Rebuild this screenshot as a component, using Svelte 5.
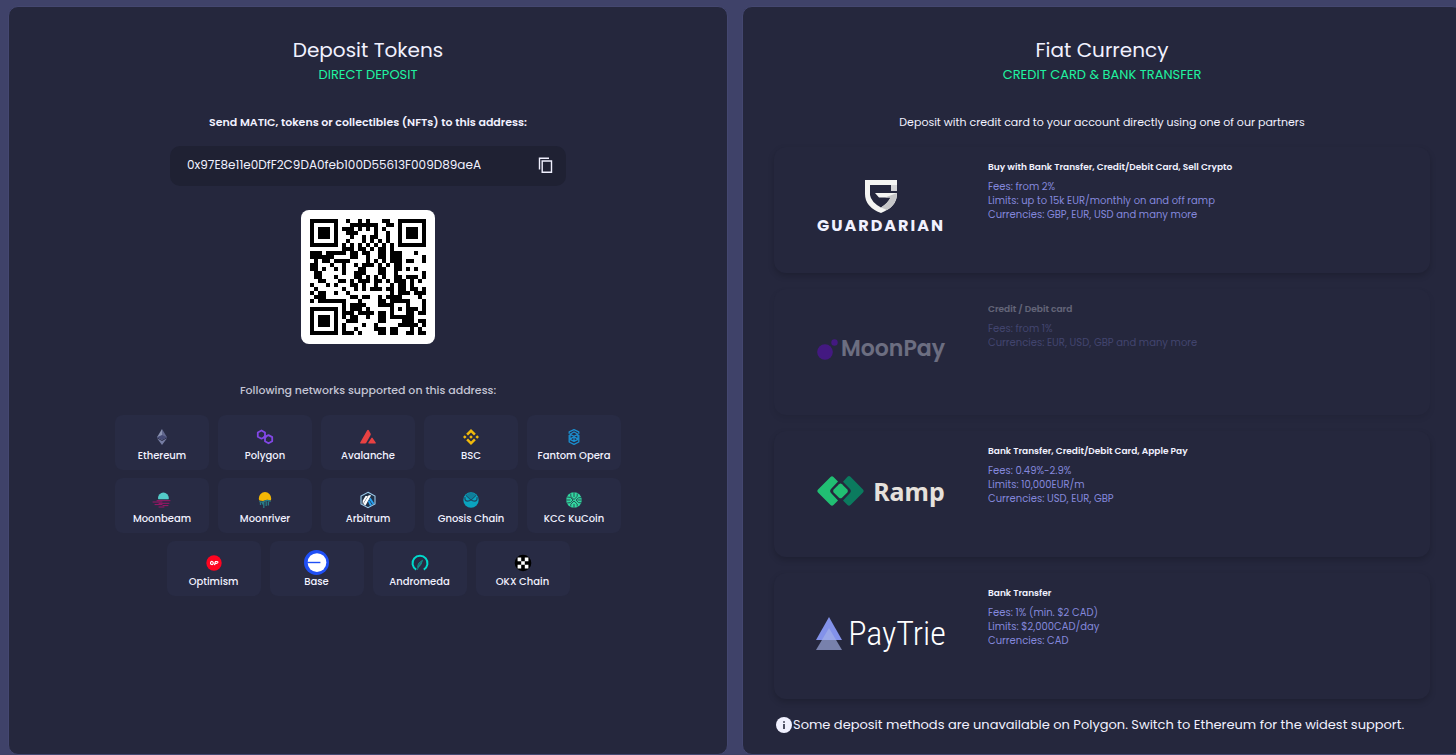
<script>
  const address = "0x97E8e11e0DfF2C9DA0feb100D55613F009D89aeA";

  let copied = $state(false);

  const networks = [
    "Ethereum", "Polygon", "Avalanche", "BSC", "Fantom Opera",
    "Moonbeam", "Moonriver", "Arbitrum", "Gnosis Chain", "KCC KuCoin",
    "Optimism", "Base", "Andromeda", "OKX Chain",
  ];

  const partners = [
    {
      id: "guardarian",
      title: "Buy with Bank Transfer, Credit/Debit Card, Sell Crypto",
      lines: ["Fees: from 2%", "Limits: up to 15k EUR/monthly on and off ramp", "Currencies: GBP, EUR, USD and many more"],
    },
    {
      id: "moonpay",
      title: "Credit / Debit card",
      lines: ["Fees: from 1%", "Currencies: EUR, USD, GBP and many more"],
      disabled: true,
    },
    {
      id: "ramp",
      title: "Bank Transfer, Credit/Debit Card, Apple Pay",
      lines: ["Fees: 0.49%-2.9%", "Limits: 10,000EUR/m", "Currencies: USD, EUR, GBP"],
    },
    {
      id: "paytrie",
      title: "Bank Transfer",
      lines: ["Fees: 1% (min. $2 CAD)", "Limits: $2,000CAD/day", "Currencies: CAD"],
    },
  ];

  async function copyAddress() {
    await navigator.clipboard.writeText(address);
    copied = true;
  }

  // QR code, version 3 (29x29), byte mode, level L, mask 0
  const SIZE = 29;
  const DATA_WORDS = 55;
  const EC_WORDS = 15;
  const LEVEL_BITS = 1;
  const MASK = 0;

  function gfMul(a, b) {
    let r = 0;
    for (let i = 7; i >= 0; i--) {
      r = (r << 1) ^ ((r >> 7) * 0x11d);
      if ((b >> i) & 1) r ^= a;
    }
    return r;
  }

  function ecWords(data) {
    const gen = new Array(EC_WORDS).fill(0);
    gen[EC_WORDS - 1] = 1;
    let root = 1;
    for (let i = 0; i < EC_WORDS; i++) {
      for (let j = 0; j < EC_WORDS; j++) {
        gen[j] = gfMul(gen[j], root);
        if (j + 1 < EC_WORDS) gen[j] ^= gen[j + 1];
      }
      root = gfMul(root, 2);
    }
    const rem = new Array(EC_WORDS).fill(0);
    for (const b of data) {
      const f = b ^ rem.shift();
      rem.push(0);
      gen.forEach((g, i) => (rem[i] ^= gfMul(g, f)));
    }
    return rem;
  }

  function encode(text) {
    let bits = "0100" + text.length.toString(2).padStart(8, "0");
    for (const c of text) bits += c.charCodeAt(0).toString(2).padStart(8, "0");
    bits += "0000";
    const words = bits.match(/.{8}/g).map((b) => parseInt(b, 2));
    for (let pad = 0xec; words.length < DATA_WORDS; pad ^= 0xfd) words.push(pad);
    return [...words, ...ecWords(words)];
  }

  function buildMatrix(words) {
    const m = Array.from({ length: SIZE }, () => new Array(SIZE).fill(false));
    const fixed = Array.from({ length: SIZE }, () => new Array(SIZE).fill(false));
    const set = (x, y, v) => {
      if (x < 0 || y < 0 || x >= SIZE || y >= SIZE) return;
      m[y][x] = v;
      fixed[y][x] = true;
    };

    for (let i = 0; i < SIZE; i++) {
      set(6, i, i % 2 === 0);
      set(i, 6, i % 2 === 0);
    }
    for (const [cx, cy] of [[3, 3], [SIZE - 4, 3], [3, SIZE - 4]]) {
      for (let dy = -4; dy <= 4; dy++) {
        for (let dx = -4; dx <= 4; dx++) {
          const d = Math.max(Math.abs(dx), Math.abs(dy));
          set(cx + dx, cy + dy, d !== 2 && d !== 4);
        }
      }
    }
    for (let dy = -2; dy <= 2; dy++) {
      for (let dx = -2; dx <= 2; dx++) {
        set(22 + dx, 22 + dy, Math.max(Math.abs(dx), Math.abs(dy)) !== 1);
      }
    }

    // format info
    const fmt = (LEVEL_BITS << 3) | MASK;
    let rem = fmt;
    for (let i = 0; i < 10; i++) rem = (rem << 1) ^ ((rem >> 9) * 0x537);
    const info = ((fmt << 10) | rem) ^ 0x5412;
    const bit = (i) => ((info >> i) & 1) === 1;
    for (let i = 0; i <= 5; i++) set(8, i, bit(i));
    set(8, 7, bit(6));
    set(8, 8, bit(7));
    set(7, 8, bit(8));
    for (let i = 9; i < 15; i++) set(14 - i, 8, bit(i));
    for (let i = 0; i < 8; i++) set(SIZE - 1 - i, 8, bit(i));
    for (let i = 8; i < 15; i++) set(8, SIZE - 15 + i, bit(i));
    set(8, SIZE - 8, true);

    // zigzag placement
    let n = 0;
    for (let right = SIZE - 1; right >= 1; right -= 2) {
      if (right === 6) right = 5;
      for (let v = 0; v < SIZE; v++) {
        for (let j = 0; j < 2; j++) {
          const x = right - j;
          const y = ((right + 1) & 2) === 0 ? SIZE - 1 - v : v;
          if (fixed[y][x]) continue;
          const dark = n < words.length * 8 && ((words[n >> 3] >> (7 - (n & 7))) & 1) === 1;
          m[y][x] = dark !== ((x + y) % 2 === 0);
          n++;
        }
      }
    }
    return m;
  }

  function qrPath(text) {
    let d = "";
    buildMatrix(encode(text)).forEach((row, y) => row.forEach((v, x) => {
      if (v) d += `M${x} ${y}h1v1h-1z`;
    }));
    return d;
  }

  const qr = qrPath(address);
</script>

{#snippet networkIcon(name)}
  <svg class:large={name === "Base"} viewBox="0 0 16 16" aria-hidden="true">
    {#if name === "Ethereum"}
      <path d="M8 0 3 8.2 8 11z" fill="#8a92b2" />
      <path d="M8 0l5 8.2L8 11z" fill="#62688f" />
      <path d="M3 8.2 8 6l5 2.2L8 11z" fill="#454a75" />
      <path d="M3 9.3 8 16l5-6.7-5 2.8z" fill="#767da3" />
    {:else if name === "Polygon"}
      <g fill="none" stroke="#8247e5" stroke-width="1.8" stroke-linejoin="round">
        <path d="M8 7.900 4.500 9.700.8 7.700V3.500L4.500 1.500 8 3.500V7.900L9.200 9" />
        <path d="M8 7.900 11.500 6.100 15.200 8.100V12.300L11.500 14.300 8 12.300V7.900L6.800 6.800" />
      </g>
    {:else if name === "Avalanche"}
      <path d="M7.2 1.3q.8-1.3 1.6 0l1.8 3.2q.4.8 0 1.6l-4.3 7.6q-.5.8-1.3.8H.8q-1.2 0-.6-1.1z" fill="#e84142" />
      <path d="M11.4 9.1q.6-1 1.2 0l3.1 4.4q.5 1-.5 1H8.9q-1.1 0-.5-1z" fill="#e84142" />
    {:else if name === "BSC"}
      <g fill="#f0b90b">
        <path d="M8 0l4.8 4.8-1.8 1.8-3-3-3 3-1.8-1.8z" />
        <path d="M8 16l4.8-4.8L11 9.4l-3 3-3-3-1.8 1.8z" />
        <path d="M1.8 6.2 3.6 8 1.8 9.8 0 8zM14.2 6.2 16 8l-1.8 1.8L12.4 8zM8 6.2 9.8 8 8 9.8 6.2 8z" />
      </g>
    {:else if name === "Fantom Opera"}
      <g fill="none" stroke="#1b8fd0" stroke-width="1.3" stroke-linejoin="round">
        <path d="M3.2 4.8v-2L8 .7l4.8 2.1v2M3.2 6v7L8 15.4l4.8-2.4V6" />
        <path d="M8 3l4 2.2L8 7.4 4 5.2zM4 6v4.3l4 2 4-2V6M8 7.4v4.7M4 10.2l4-2.6 4 2.6" />
      </g>
    {:else if name === "Moonbeam"}
      <path d="M4 6a5.400 5.400 0 0 1 10.800 0q0 .7-.3 1.200H4.300Q4 6.600 4 6z" fill="#53cbc8" />
      <path d="M3 8.700h13M-1 10h9M5 11.300h10M1 12.600h7M9 13.600h5M5 15h5" stroke="#a01568" stroke-width="1" stroke-linecap="round" />
    {:else if name === "Moonriver"}
      <path d="M1.800 6.500a6.200 6.500 0 0 1 12.400 0q0 1.200-.4 2L10 7.800 6 9 2.400 8.500Q1.800 7.500 1.800 6.500z" fill="#f2b705" />
      <path d="M2.300 9.500q3 1.500 5.700-.5 3-1.500 5.600.5M3.500 10v3M5.600 10.500v2M6.800 9.500V16M9.200 9.500v4.500M11.400 9.500v4" fill="none" stroke="#287d86" stroke-width="1.300" />
    {:else if name === "Arbitrum"}
      <path d="M8 .3 15 4.100v7.800L8 15.700 1 11.900V4.100z" fill="#213147" stroke="#9dcced" stroke-width="1.100" />
      <path d="M8.700 3.300h2.400L5.500 13.400l-2.200-1.300z" fill="#fff" />
      <path d="M5.500 4h2.400L2.700 12.300v-3.500z" fill="#fff" />
      <path d="M9.200 7.400l1.200-2 4 6.200-1.600 1zM8 9.500l1-1.600 3 5.200-2 1z" fill="#28a0f0" />
    {:else if name === "Gnosis Chain"}
      <circle cx="8" cy="8" r="7.700" fill="#0aa3bf" />
      <path d="M2.500 3q5.500-4.500 11 0L8 8.300z" fill="#0f7f9a" />
      <path d="M2.800 3.300 8 8.200l5.200-4.900" fill="none" stroke="#1d4762" stroke-width="1" />
      <path d="M2 5.200Q1.400 9 4.600 9.200q1.900 0 3.400-1.300 1.500 1.300 3.400 1.300Q14.600 9 14 5.200" fill="none" stroke="#1d4762" stroke-width="1.200" />
    {:else if name === "KCC KuCoin"}
      <circle cx="8" cy="8" r="7.800" fill="#31d7a0" />
      <path d="M8 0v5M4.800 1.500v3L8 7.500l3.200-3v-3M0 8h4.500M1 5l3.500.4L7 8l-2.500 2.600L1 11M16 5.500l-3.500.3L10 8l2.500 2.600 3.500.3M11.500 8H16M8 16v-4M4.800 14.500v-2.300L8 9l3.200 3v2.500" fill="none" stroke="#26474f" stroke-width=".9" />
    {:else if name === "Optimism"}
      <circle cx="8" cy="8" r="7.700" fill="#ff0420" />
      <g fill="none" stroke="#fff" stroke-width="1.200">
        <ellipse cx="5.900" cy="8" rx="1.400" ry="1.500" transform="rotate(15 5.900 8)" />
        <path d="M8.500 10.200 9.400 6.500h1.500q1.300.2.800 1.300-.4.800-2.500.8" />
      </g>
    {:else if name === "Base"}
      <circle cx="8" cy="8" r="8" fill="#1f4ff5" />
      <circle cx="8.300" cy="8" r="6" fill="#fff" />
      <path d="M2 8h8.500" stroke="#1f4ff5" stroke-width=".9" />
    {:else if name === "Andromeda"}
      <path d="M4.200 14.600a7.500 7.500 0 1 1 7.600 0" fill="none" stroke="#00dacc" stroke-width="2" />
      <path d="M10.500 5.200Q5 8 5.500 12.500 9.800 10.500 10.500 5.200M5 15l4-7" fill="#176b75" stroke="#12988f" stroke-width=".8" />
    {:else}
      <circle cx="8" cy="8" r="8.300" fill="#000" />
      <path d="M2.600 2.600h3.600v3.600H2.600zM9.800 2.600h3.600v3.600H9.800zM6.200 6.200h3.600v3.600H6.200zM2.600 9.800h3.600v3.600H2.600zM9.800 9.800h3.600v3.600H9.800z" fill="#fff" />
    {/if}
  </svg>
{/snippet}

{#snippet partnerLogo(id)}
  {#if id === "guardarian"}
    <span class="logo guardarian">
      <svg width="32" height="33" viewBox="0 0 32 33" aria-hidden="true">
        <path d="M0 0h32v5H5v10q1 7 11 12.500Q23 23 25.500 17.500H14L10 13h22q.5 14-16 20Q0 27 0 14z" fill="#f5f5f3" />
        <path d="M26 5h6v6h-6z" fill="#d4d4d6" />
        <path d="M16 27.500Q23 23 25.500 17.500L20 17.500 32 13q0 11-10 17z" fill="#c6c6c8" />
      </svg>
      <span>GUARDARIAN</span>
    </span>
  {:else if id === "moonpay"}
    <span class="logo moonpay">
      <svg width="21" height="21" viewBox="0 0 21 21" aria-hidden="true">
        <circle cx="8" cy="13" r="7.800" fill="#7d00ff" />
        <circle cx="17.500" cy="3.500" r="3.200" fill="#7d00ff" />
      </svg>
      <span>MoonPay</span>
    </span>
  {:else if id === "ramp"}
    <span class="logo ramp">
      <svg width="47" height="30" viewBox="0 0 47 30" aria-hidden="true">
        <path d="M28 3.500l2.500-2.700q1.500-1.400 3 0L46 13.500q1.300 1.500 0 3L33.500 29q-1.500 1.300-3 0L26 24.500l7-7.500q1.700-2 0-4l-7-7.200z" fill="#0b7a5e" />
        <path d="M13.500 1q1.500-1.400 3 0L21 5.500l-7 7.500q-1.700 2 0 4l7 7.500-4.500 4.500q-1.500 1.300-3 0L1 16.500q-1.300-1.500 0-3z" fill="#21bf73" />
        <path d="M22 8.300q1.500-1.400 3 0l5.300 5.200q1.300 1.500 0 3L25 21.700q-1.500 1.300-3 0l-5.300-5.200q-1.300-1.500 0-3z" fill="#21bf73" />
      </svg>
      <span>Ramp</span>
    </span>
  {:else}
    <span class="logo paytrie">
      <svg width="26" height="33" viewBox="0 0 26 33" aria-hidden="true">
        <path d="M13 0l13 23H0z" fill="#8392ea" />
        <path d="M13 11l13 22H0z" fill="#a4b2e8" opacity=".65" />
      </svg>
      <span>PayTrie</span>
    </span>
  {/if}
{/snippet}

<main>
  <section class="panel">
    <header>
      <h2>Deposit Tokens</h2>
      <p class="subtitle">DIRECT DEPOSIT</p>
    </header>

    <p class="intro strong">Send MATIC, tokens or collectibles (NFTs) to this address:</p>

    <div class="address">
      <span>{address}</span>
      <button class="copy" onclick={copyAddress} aria-label={copied ? "Copied" : "Copy address"}>
        <svg width="16" height="16" viewBox="0 0 16 16" fill="none" stroke="#f1f1ff" stroke-width="1.400" aria-hidden="true">
          <path d="M1.500 12.500V1.200H11" />
          <path d="M4.200 4h9.300v11.200H4.200z" />
        </svg>
      </button>
    </div>

    <div class="qr">
      <svg width="116" height="116" viewBox="0 0 29 29" shape-rendering="crispEdges" role="img" aria-label="Address QR code">
        <path d={qr} fill="#000" />
      </svg>
    </div>

    <p class="supported">Following networks supported on this address:</p>

    <ul class="networks">
      {#each networks as name (name)}
        <li>
          <span class="icon">{@render networkIcon(name)}</span>
          <span>{name}</span>
        </li>
      {/each}
    </ul>
  </section>

  <section class="panel">
    <header>
      <h2>Fiat Currency</h2>
      <p class="subtitle">CREDIT CARD &amp; BANK TRANSFER</p>
    </header>

    <p class="intro">Deposit with credit card to your account directly using one of our partners</p>

    <div class="partners">
      {#each partners as partner (partner.id)}
        <button class="partner" disabled={partner.disabled}>
          {@render partnerLogo(partner.id)}
          <span class="details">
            <strong>{partner.title}</strong>
            {#each partner.lines as line}
              <span>{line}</span>
            {/each}
          </span>
        </button>
      {/each}
    </div>

    <p class="note">
      <svg width="16" height="16" viewBox="0 0 16 16" aria-hidden="true">
        <circle cx="8" cy="8" r="8" fill="#f1f1ff" />
        <path d="M7.200 7h1.600v5H7.200zM7.200 4.200h1.600v1.600H7.200z" fill="#25273d" />
      </svg>
      <span>Some deposit methods are unavailable on Polygon. Switch to Ethereum for the widest support.</span>
    </p>
  </section>
</main>

<style>
  :global(body) {
    background: #3f4269;
    overflow: hidden;
  }

  main {
    display: flex;
    gap: 14px;
    padding: 6px 0 1px 8px;
    margin-right: -6px;
    font-family: Poppins, Inter, "Open Sans", sans-serif;
    color: #f1f1ff;
  }

  .panel {
    flex: 1 1 0;
    min-width: 0;
    box-sizing: border-box;
    display: flex;
    flex-direction: column;
    align-items: center;
    padding: 28px 31px 19px;
    background: #25273d;
    border: 1px solid #444770;
    border-radius: 10px;
  }

  header {
    text-align: center;
  }

  h2 {
    margin: 0;
    font-size: 20px;
    line-height: 30px;
    font-weight: 400;
  }

  p {
    margin: 0;
  }

  .subtitle {
    font-size: 13px;
    line-height: 20px;
    color: #20f3a0;
  }

  .intro {
    margin-top: 28px;
    font-size: 11px;
    line-height: 18px;
  }

  .intro.strong {
    font-weight: 600;
  }

  .address {
    display: flex;
    align-items: center;
    justify-content: space-between;
    box-sizing: border-box;
    width: 100%;
    max-width: 396px;
    height: 40px;
    margin-top: 15px;
    padding: 0 12px 2px 17px;
    background: #1f2133;
    border-radius: 10px;
    font-size: 12px;
  }

  .copy {
    display: flex;
    padding: 0;
    background: none;
    border: none;
    cursor: pointer;
  }

  .qr {
    display: flex;
    margin-top: 24px;
    padding: 9px;
    background: #fff;
    border-radius: 8px;
  }

  .supported {
    margin-top: 37px;
    font-size: 11px;
    line-height: 18px;
    font-weight: 500;
    color: #c3c4d4;
  }

  .networks {
    display: flex;
    flex-wrap: wrap;
    justify-content: center;
    gap: 8px 9px;
    max-width: 508px;
    margin: 16px 0 0;
    padding: 0;
    list-style: none;
  }

  .networks li {
    display: flex;
    flex-direction: column;
    align-items: center;
    box-sizing: border-box;
    width: 94px;
    padding: 9px 0 7px;
    background: #282b44;
    border-radius: 8px;
    font-size: 10px;
    line-height: 14px;
    font-weight: 500;
  }

  .icon {
    display: flex;
    align-items: center;
    justify-content: center;
    height: 25px;
  }

  .icon svg {
    width: 16px;
    height: 16px;
    overflow: visible;
  }

  .icon svg.large {
    width: 25px;
    height: 25px;
  }

  .partners {
    display: flex;
    flex-direction: column;
    gap: 16px;
    width: 100%;
    margin-top: 16px;
  }

  .partner {
    display: flex;
    align-items: flex-start;
    gap: 43px;
    min-height: 126px;
    padding: 13px 43px 0;
    background: #25273d;
    border: none;
    border-radius: 12px;
    box-shadow: 0 3px 6px rgba(0, 0, 0, 0.18);
    font: inherit;
    color: inherit;
    text-align: left;
    cursor: pointer;
  }

  .partner:disabled {
    box-shadow: 0 3px 6px rgba(0, 0, 0, 0.08);
    cursor: default;
  }

  .partner:disabled > .logo {
    opacity: 0.35;
  }

  .partner:disabled > .details {
    opacity: 0.3;
  }

  .logo {
    display: flex;
    align-items: center;
    justify-content: center;
    flex: none;
    width: 128px;
    height: 94px;
    white-space: nowrap;
  }

  .logo svg {
    flex: none;
  }

  .guardarian {
    flex-direction: column;
    gap: 4px;
    font: 700 16px/18px Poppins, Lato, sans-serif;
    letter-spacing: 2px;
  }

  .moonpay {
    gap: 3px;
    font: 600 22px/28px Poppins, Inter, sans-serif;
  }

  .ramp {
    gap: 9px;
    color: #e6e1dc;
    font: 700 25px/30px "Noto Sans", sans-serif;
  }

  .paytrie {
    gap: 6px;
    color: #fff;
    font: 300 34px/33px "Roboto Condensed", "Barlow Condensed", Roboto, sans-serif;
  }

  .details {
    display: flex;
    flex-direction: column;
    font-size: 10px;
    line-height: 14px;
    color: #8487dc;
  }

  .details strong {
    margin-bottom: 6px;
    font-size: 9px;
    font-weight: 600;
    color: #f1f1ff;
  }

  .note {
    display: flex;
    align-items: center;
    align-self: flex-start;
    gap: 1px;
    margin-top: 16px;
    padding-left: 2px;
    font-size: 13px;
    line-height: 20px;
  }

  .note svg {
    flex: none;
  }
</style>
